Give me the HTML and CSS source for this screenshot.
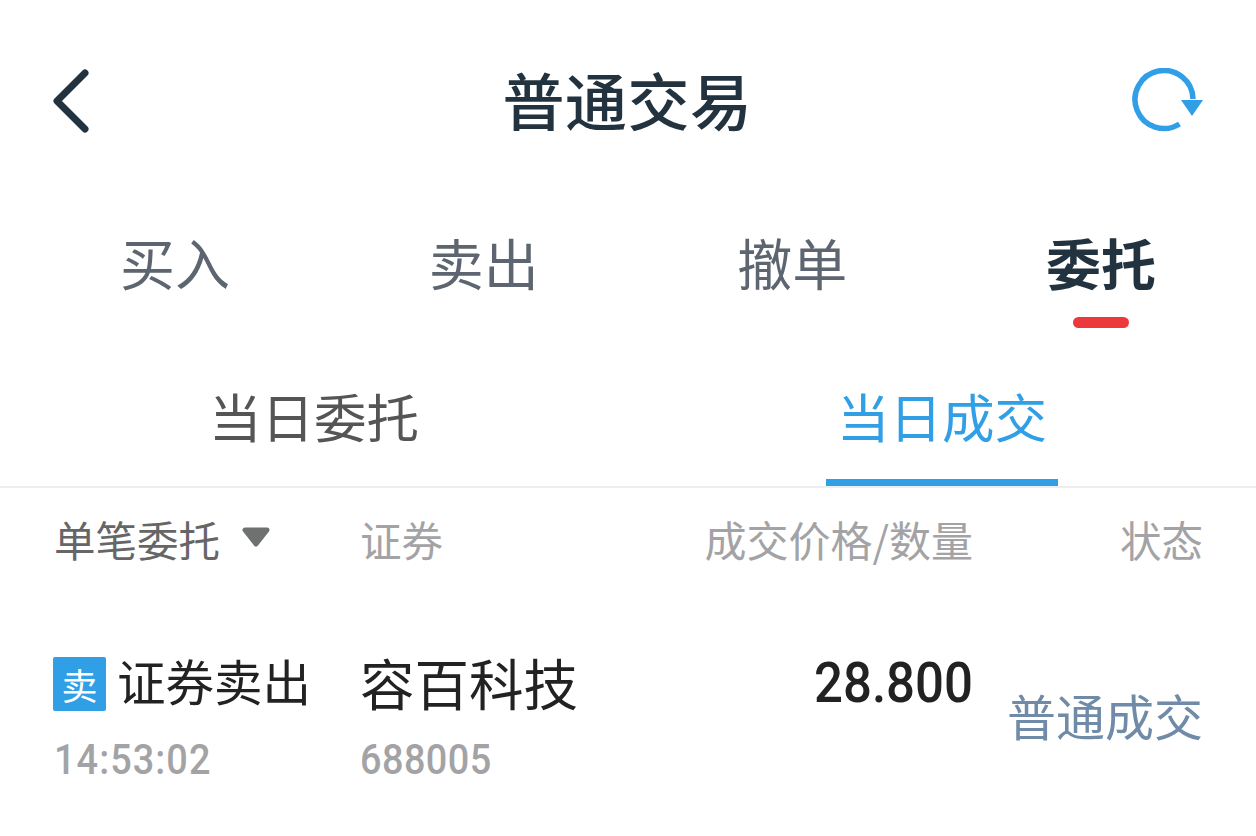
FILE: index.html
```html
<!DOCTYPE html>
<html lang="zh-CN">
<head>
    <meta charset="UTF-8">
    <title>普通交易</title>
    <link rel="stylesheet" href="styles.css">
</head>
<body>
    <header class="top-bar">
        <svg class="back-icon" width="38" height="64" viewBox="0 0 38 64">
            <path d="M33 4 L5 32 L33 60" fill="none" stroke="#22333f" stroke-width="7" stroke-linecap="round" stroke-linejoin="round"/>
        </svg>
        <h1>普通交易</h1>
        <svg class="refresh-icon" width="72" height="66" viewBox="0 0 72 66">
            <path d="M62 31 A29 29 0 1 0 48.5 56" fill="none" stroke="#309fe6" stroke-width="5.5"/>
            <path d="M50 32 H72 L61 48 Z" fill="#309fe6"/>
        </svg>
    </header>

    <nav class="main-tabs">
        <span class="main-tab">买入</span>
        <span class="main-tab">卖出</span>
        <span class="main-tab">撤单</span>
        <span class="main-tab active">委托</span>
    </nav>

    <nav class="sub-tabs">
        <div class="sub-tab">当日委托</div>
        <div class="sub-tab active">当日成交</div>
    </nav>

    <div class="table-head">
        <div class="filter">单笔委托
            <svg class="caret" width="28" height="20" viewBox="0 0 28 20">
                <path d="M3 3 H25 L14 17 Z" fill="#6f7170" stroke="#6f7170" stroke-width="5" stroke-linejoin="round"/>
            </svg>
        </div>
        <div>证券</div>
        <div class="right price-head">成交价格/数量</div>
        <div class="right">状态</div>
    </div>

    <div class="order-row">
        <div>
            <div class="order-type"><span class="badge">卖</span>证券卖出</div>
            <div class="minor time">14:53:02</div>
        </div>
        <div>
            <div class="stock-name">容百科技</div>
            <div class="minor">688005</div>
        </div>
        <div class="right price">28.800</div>
        <div class="right status">普通成交</div>
    </div>
</body>
</html>
```

FILE: styles.css
```css
* {
    box-sizing: border-box;
}
html, body {
    height: 100%;
}
body {
    margin: 0;
    background: #fff;
    font-family: "Noto Sans CJK SC", "Noto Sans", sans-serif;
    overflow: hidden;
}
.top-bar {
    height: 200px;
    padding: 0 53px 0 52px;
    display: grid;
    grid-template-columns: 1fr auto 1fr;
    align-items: center;
}
.back-icon {
    margin-top: 1px;
}
.refresh-icon {
    margin-top: 1px;
    justify-self: end;
}
h1 {
    margin: 0 0 3px;
    font-size: 62px;
    font-weight: 500;
    letter-spacing: 0.5px;
    color: #22333f;
    line-height: 1;
}
.main-tabs {
    height: 129px;
    padding: 0 100px 0 120px;
    display: flex;
    justify-content: space-between;
}
.main-tab {
    position: relative;
    height: 129px;
    padding-top: 31px;
    font-size: 55px;
    line-height: 60px;
    color: #5d6670;
}
.main-tab.active {
    font-weight: 700;
    color: #22333f;
}
.main-tab.active::after {
    content: "";
    position: absolute;
    left: 27px;
    bottom: 1px;
    width: 56px;
    height: 11px;
    border-radius: 6px;
    background: #ec3a3c;
}
.sub-tabs {
    height: 159px;
    border-bottom: 2px solid #eeeeee;
    display: grid;
    grid-template-columns: 1fr 1fr;
}
.sub-tab {
    width: 232px;
    height: 157px;
    justify-self: center;
    padding-top: 56px;
    font-size: 52.5px;
    line-height: 60px;
    text-align: center;
    white-space: nowrap;
    color: #555555;
}
.sub-tab.active {
    color: #309fe6;
    border-bottom: 7px solid #309fe6;
}
.table-head, .order-row {
    display: grid;
    grid-template-columns: 306px 1fr 330px 229px;
    padding: 0 53px 0 54px;
}
.table-head {
    height: 108px;
    padding-top: 23px;
    font-size: 41.5px;
    line-height: 56px;
    color: #a3a3a5;
}
.price-head {
    font-size: 42px;
    margin-right: 1px;
    white-space: nowrap;
}
.filter {
    display: flex;
    align-items: flex-start;
    color: #666666;
}
.caret {
    margin: 16px 0 0 22px;
}
.right {
    text-align: right;
}
.order-row {
    padding-top: 52px;
}
.order-type {
    display: flex;
    align-items: center;
    height: 64px;
    font-size: 48.5px;
    white-space: nowrap;
    color: #222222;
}
.badge {
    width: 53px;
    height: 54px;
    margin: 8px 11px 0 -1px;
    border-radius: 2px;
    background: #309fe6;
    color: #fff;
    font-size: 36px;
    line-height: 54px;
    text-align: center;
}
.stock-name {
    height: 64px;
    font-size: 54.5px;
    line-height: 68px;
    white-space: nowrap;
    color: #222222;
}
/* no DIN style font here, so Roboto gets squeezed to the same width */
.minor {
    margin-top: 23px;
    font-family: Roboto, sans-serif;
    font-weight: 500;
    font-size: 43px;
    letter-spacing: 0.5px;
    line-height: 48px;
    color: #a3a3a5;
    transform: scaleX(0.88);
    transform-origin: left center;
}
.time {
    letter-spacing: 1.2px;
}
.price {
    margin-right: 1px;
    font-family: Roboto, sans-serif;
    font-weight: 500;
    font-size: 56px;
    line-height: 70px;
    color: #222222;
    transform: scaleX(0.91);
    transform-origin: right center;
}
.status {
    margin-top: 35px;
    font-size: 49px;
    line-height: 64px;
    white-space: nowrap;
    color: #6f8ba8;
}
```
